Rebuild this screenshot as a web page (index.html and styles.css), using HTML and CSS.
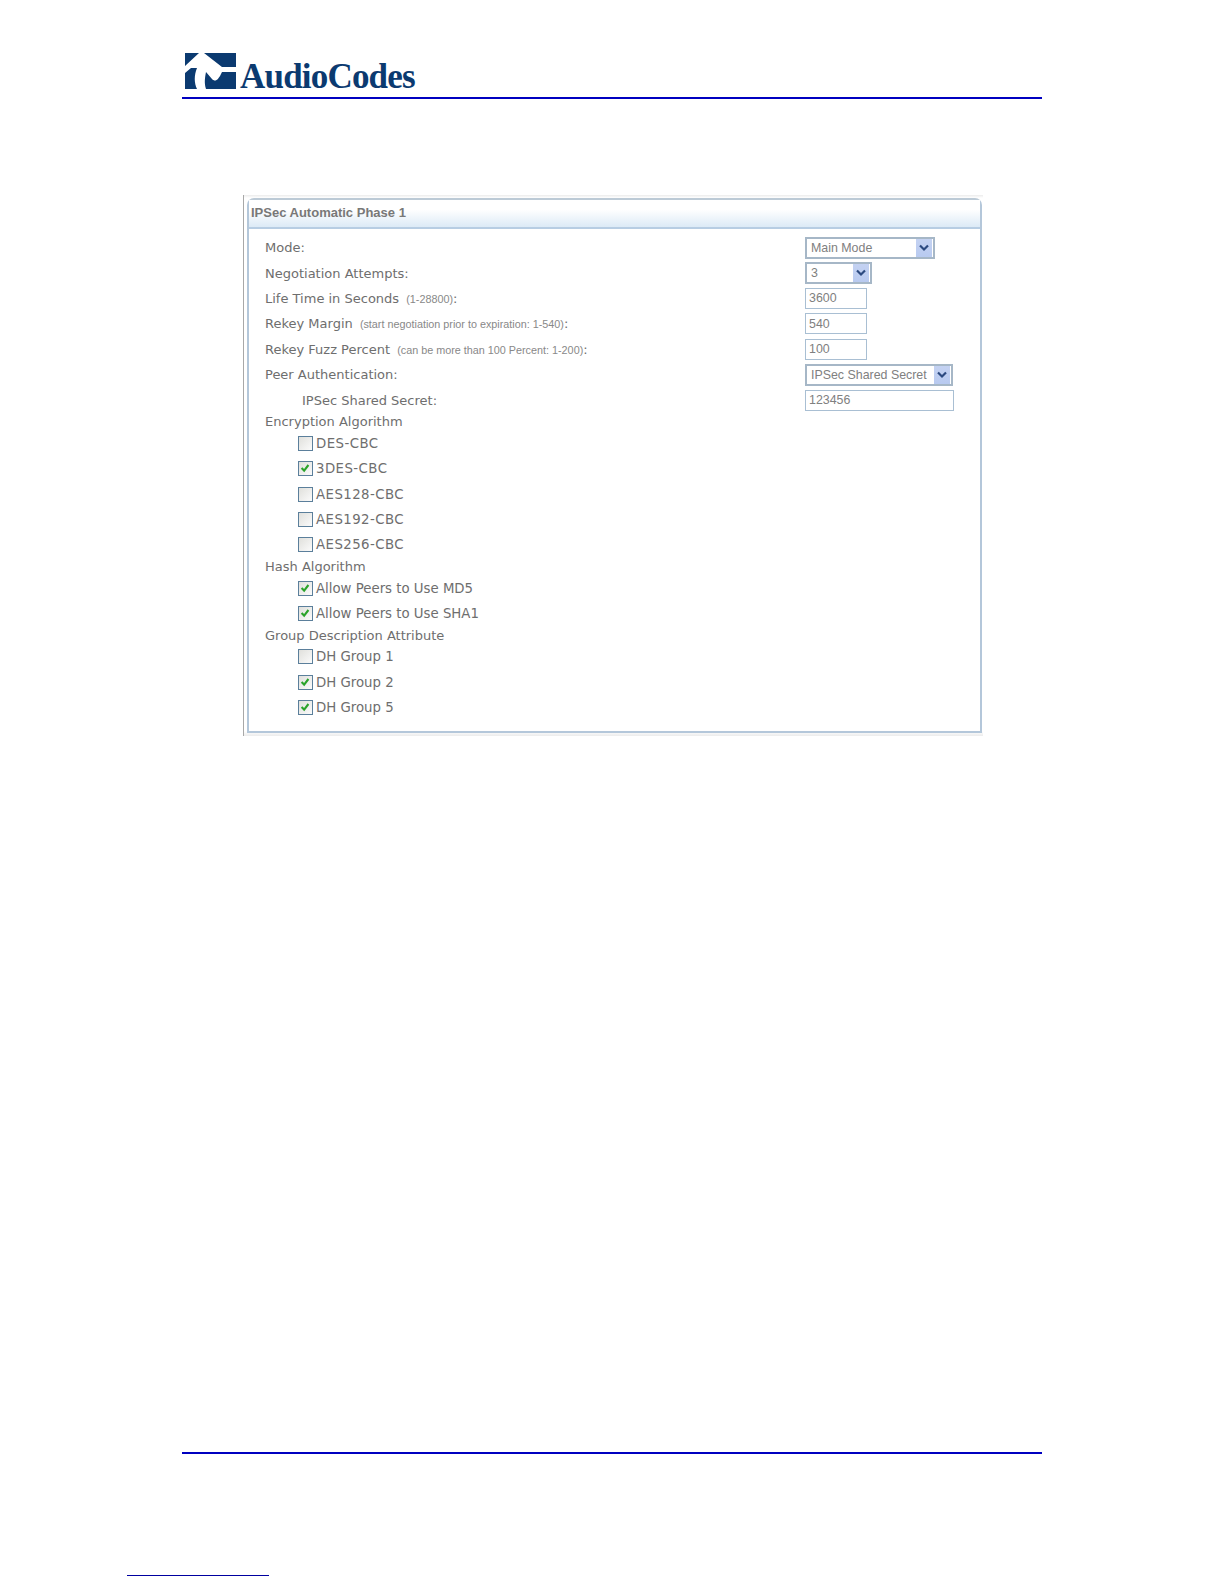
FILE: index.html
```html
<!DOCTYPE html>
<html lang="en">
<head>
<meta charset="utf-8">
<title>IPSec Automatic Phase 1</title>
<link rel="stylesheet" href="styles.css">
</head>
<body>
<div class="page">
  <header class="header">
    <svg class="logo-mark" viewBox="0 0 51 36" width="51" height="36" aria-hidden="true">
      <path fill="#0b3a70" d="M0 0H14L0 13ZM19 0H51V14H37ZM0 20L6 15H12C9 22 9 30 12 36H0ZM21 36C19 30 20 24 21 19L27 26C30 29 33 28 37 19H51V36Z"/>
    </svg>
    <span class="logo-text">AudioCodes</span>
  </header>
  <main class="panel-frame">
    <section class="panel">
      <h2 class="panel-title">IPSec Automatic Phase 1</h2>
      <div class="panel-body">
        <div class="row"><span class="label">Mode:</span>
          <span class="select w-main">Main Mode<span class="arrow"><svg viewBox="0 0 12 8" width="12" height="8"><path d="M2 1.500L6 5.500L10 1.500" /></svg></span></span></div>
        <div class="row"><span class="label">Negotiation Attempts:</span>
          <span class="select w-num">3<span class="arrow"><svg viewBox="0 0 12 8" width="12" height="8"><path d="M2 1.500L6 5.500L10 1.500" /></svg></span></span></div>
        <div class="row"><span class="label">Life Time in Seconds <small>(1-28800)</small>:</span>
          <span class="input w-short">3600</span></div>
        <div class="row"><span class="label">Rekey Margin <small>(start negotiation prior to expiration: 1-540)</small>:</span>
          <span class="input w-short">540</span></div>
        <div class="row"><span class="label">Rekey Fuzz Percent <small>(can be more than 100 Percent: 1-200)</small>:</span>
          <span class="input w-short">100</span></div>
        <div class="row"><span class="label">Peer Authentication:</span>
          <span class="select w-auth">IPSec Shared Secret<span class="arrow"><svg viewBox="0 0 12 8" width="12" height="8"><path d="M2 1.500L6 5.500L10 1.500" /></svg></span></span></div>
        <div class="row"><span class="label indent">IPSec Shared Secret:</span>
          <span class="input w-long">123456</span></div>

        <div class="group">Encryption Algorithm</div>
        <div class="check wide"><span class="box"></span>DES-CBC</div>
        <div class="check wide"><span class="box"><svg viewBox="0 0 14 14" width="12" height="12"><path d="M3 7L6 10L11 3.500"/></svg></span>3DES-CBC</div>
        <div class="check wide"><span class="box"></span>AES128-CBC</div>
        <div class="check wide"><span class="box"></span>AES192-CBC</div>
        <div class="check wide"><span class="box"></span>AES256-CBC</div>

        <div class="group">Hash Algorithm</div>
        <div class="check"><span class="box"><svg viewBox="0 0 14 14" width="12" height="12"><path d="M3 7L6 10L11 3.500"/></svg></span>Allow Peers to Use MD5</div>
        <div class="check"><span class="box"><svg viewBox="0 0 14 14" width="12" height="12"><path d="M3 7L6 10L11 3.500"/></svg></span>Allow Peers to Use SHA1</div>

        <div class="group">Group Description Attribute</div>
        <div class="check"><span class="box"></span>DH Group 1</div>
        <div class="check"><span class="box"><svg viewBox="0 0 14 14" width="12" height="12"><path d="M3 7L6 10L11 3.500"/></svg></span>DH Group 2</div>
        <div class="check"><span class="box"><svg viewBox="0 0 14 14" width="12" height="12"><path d="M3 7L6 10L11 3.500"/></svg></span>DH Group 5</div>
      </div>
    </section>
  </main>
  <div class="footer-rule"></div>
  <div class="foot-note-rule"></div>
</div>
</body>
</html>
```
FILE: styles.css
```css
html, body { margin: 0; padding: 0; background: #fff; }
.page {
  width: 1224px;
  height: 1584px;
  box-sizing: border-box;
  padding-top: 53px;
  display: flex;
  flex-direction: column;
  overflow: hidden;
  font-family: "DejaVu Sans", Verdana, sans-serif;
}
.header {
  margin-left: 182px;
  width: 860px;
  height: 46px;
  box-sizing: border-box;
  border-bottom: 2px solid #0000c0;
  display: flex;
  align-items: flex-start;
  padding-left: 3px;
}
.logo-mark { display: block; flex: none; }
.logo-text {
  margin-left: 4px;
  margin-top: 4px;
  font-family: "Liberation Serif", "Times New Roman", serif;
  font-weight: 700;
  font-size: 35px;
  line-height: 40px;
  letter-spacing: -0.8px;
  color: #0b3a70;
}
.panel-frame {
  margin: 96px 0 0 243px;
  width: 740px;
  height: 541px;
  box-sizing: border-box;
  border-left: 1px solid #a8a8a8;
  padding: 3px 1px 3px 3px;
  background: linear-gradient(#ececec, #fff 3px, #fff 536px, #ececec);
}
.panel {
  box-sizing: border-box;
  height: 535px;
  border: 2px solid #b4c7da;
  border-top-color: #bccad6;
  border-radius: 7px 7px 0 0;
  background: #fff;
}
.panel-title {
  margin: 0;
  height: 29px;
  box-sizing: border-box;
  padding: 3px 0 0 2px;
  font-family: "Liberation Sans", Arial, sans-serif;
  font-size: 13px;
  line-height: 20px;
  font-weight: 700;
  color: #787878;
  background: linear-gradient(#fff 35%, #dceaf6 100%);
  border-bottom: 2px solid #b7cde3;
}
.panel-body {
  padding: 6px 0 0 16px;
  font-size: 13px;
  color: #6e6e6e;
}
.row {
  height: 25.400px;
  display: flex;
  align-items: center;
}
.label { white-space: nowrap; width: 540px; flex: none; box-sizing: border-box; }
.label.indent { padding-left: 37px; }
small {
  margin-left: 3px;
  font-family: "Liberation Sans", Arial, sans-serif;
  font-size: 10.800px;
  color: #888;
}
.select, .input {
  box-sizing: border-box;
  font-family: "Liberation Sans", Arial, sans-serif;
  font-size: 12.400px;
  color: #808080;
  background: #fff;
  white-space: nowrap;
  display: flex;
  align-items: center;
}
.select {
  height: 22px;
  border: 2px solid #a6b7c7;
  padding-left: 4px;
  justify-content: space-between;
}
.input {
  height: 21px;
  border: 1px solid #a9bfd3;
  padding-left: 3px;
}
.arrow {
  width: 16px;
  height: 18px;
  background: linear-gradient(#c4d2f2, #b8caf0);
  display: flex;
  align-items: center;
  justify-content: center;
  flex: none;
  margin-right: 1px;
}
.arrow path { fill: none; stroke: #2c4a80; stroke-width: 2.200; }
.w-main { width: 130px; }
.w-num { width: 67px; }
.w-short { width: 62px; }
.w-auth { width: 148px; }
.w-long { width: 149px; }
.group {
  height: 17.400px;
  line-height: 17.400px;
  margin-top: 0.500px;
}
.check {
  height: 25.400px;
  display: flex;
  align-items: center;
  padding-left: 33px;
  font-size: 13.300px;
}
.check.wide { letter-spacing: 0.450px; }
.box {
  box-sizing: border-box;
  width: 15px;
  height: 15px;
  margin-right: 3px;
  border: 1.500px solid #5b7f9b;
  background: linear-gradient(135deg, #e0e0dc, #fbfbfb);
  display: flex;
  flex: none;
}
.box svg { display: block; }
.box path { fill: none; stroke: #2aa32a; stroke-width: 2.400; }
.footer-rule {
  margin: 716px 0 0 182px;
  width: 860px;
  height: 2px;
  background: #0000c0;
}
.foot-note-rule {
  margin: 121px 0 0 127px;
  width: 142px;
  height: 1px;
  background: #0000a0;
}
```
